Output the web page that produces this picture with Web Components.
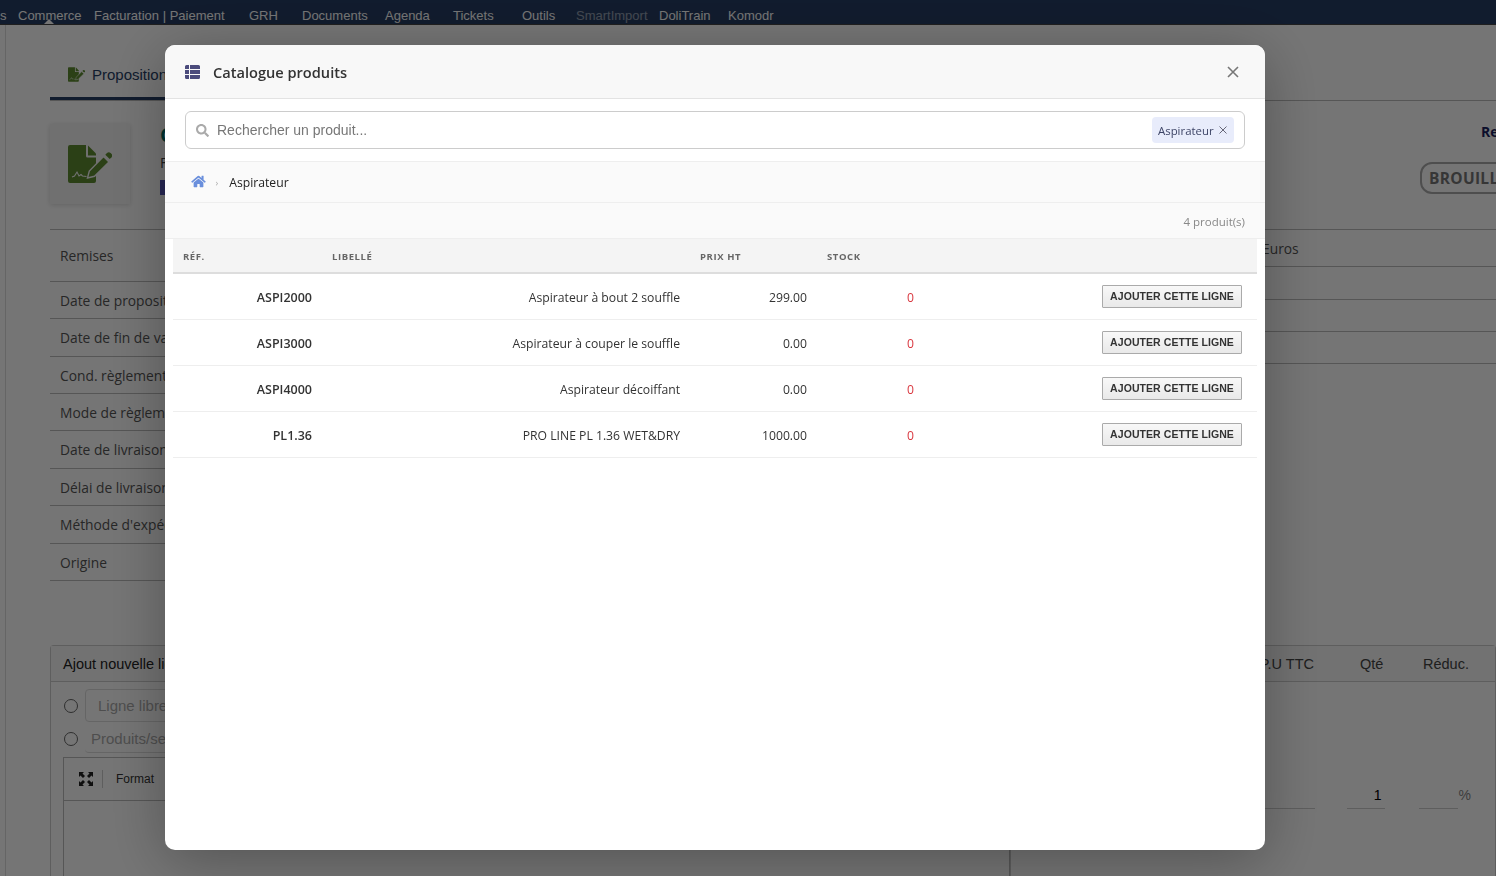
<!DOCTYPE html>
<html lang="fr">
<head>
<meta charset="utf-8">
<title>Catalogue produits</title>
<style>
  html, body { margin: 0; height: 876px; overflow: hidden; background: #fff; }
  body { font-family: "Liberation Sans", Arial, sans-serif; }
</style>
</head>
<body>
<main-page></main-page>
<catalog-modal>
  <product-row ref="ASPI2000" price="299.00" stock="0">Aspirateur à bout 2 souffle</product-row>
  <product-row ref="ASPI3000" price="0.00" stock="0">Aspirateur à couper le souffle</product-row>
  <product-row ref="ASPI4000" price="0.00" stock="0">Aspirateur décoiffant</product-row>
  <product-row ref="PL1.36" price="1000.00" stock="0">PRO LINE PL 1.36 WET&amp;DRY</product-row>
</catalog-modal>

<script>
// same drawing for the tab and for the big box, --cut is the colour behind it
const fileIcon = `
  <path d="M2 0H18V11a1.500 1.500 0 0 0 1.500 1.500H28V36a2 2 0 0 1-2 2H2a2 2 0 0 1-2-2V2A2 2 0 0 1 2 0z"/>
  <path d="M20 .5L28 8.500V10.500H20z"/>
  <path d="M4 32l2.500-1 2.500-4 2 4 2-1.500 1.500 1.500 4 .5" fill="none" style="stroke:var(--cut)" stroke-width="1.100"/>
  <path d="M19.500 33l1.800-7L35.500 11.500 41 17 26.500 31.300z" style="stroke:var(--cut)" stroke-width="1.400"/>
  <path d="M37.300 9.700l1.700-1.700a2.600 2.600 0 0 1 3.600 0l.8.800a2.600 2.600 0 0 1 0 3.600l-1.700 1.700z"/>`;

class TopBar extends HTMLElement {
  constructor() {
    super();
    this.attachShadow({ mode: 'open' });
    const items = [
      ['s', 0], ['Commerce', 18], ['Facturation | Paiement', 94], ['GRH', 249], ['Documents', 302],
      ['Agenda', 385], ['Tickets', 453], ['Outils', 522], ['SmartImport', 576], ['DoliTrain', 659], ['Komodr', 728]
    ];
    const html = items.map(([label, x]) => {
      const cls = label === 'SmartImport' ? 'off' : '';
      return `<a class="${cls}" data-x="${x}">${label}</a>`;
    }).join('');
    this.shadowRoot.innerHTML = `
    <style>
      :host {
        display: block;
        height: 24px;
        background: #263d64;
        border-bottom: 1px solid #444;
        color: #fff;
        font-size: 13px;
        position: relative;
      }
      nav { display: flex; height: 24px; align-items: center; padding-top: 7px; box-sizing: border-box; white-space: nowrap; }
      a { display: block; }
      a.off { opacity: .5; }
      .caret { position: absolute; left: 44px; bottom: 0; border: 5px solid transparent; border-top: 0; border-bottom-color: #fff; }
    </style>
    <nav>${html}</nav>
    <span class="caret"></span>`;
    const links = [...this.shadowRoot.querySelectorAll('a')];
    links.forEach((a, i) => {
      a.style.flex = '0 0 auto';
      const next = links[i + 1];
      a.style.width = next ? (next.dataset.x - a.dataset.x) + 'px' : 'auto';
    });
  }
}

class InfoRows extends HTMLElement {
  constructor() {
    super();
    this.attachShadow({ mode: 'open' });
    this.shadowRoot.innerHTML = `
    <style>
      :host { display: block; border-top: 1px solid #bbb; font-family: "Open Sans", sans-serif; font-size: 13.800px; color: #555; }
      ::slotted(div) { display: flex; align-items: center; border-bottom: 1px solid #bbb; padding-left: 10px; box-sizing: border-box; white-space: nowrap; }
    </style>
    <slot></slot>`;
  }
}

class MainPage extends HTMLElement {
  constructor() {
    super();
    this.attachShadow({ mode: 'open' });
    this.shadowRoot.innerHTML = `
    <style>
      :host { display: block; height: 876px; overflow: hidden; position: relative; }
      .frame { margin-left: 5px; border-left: 1px solid #ddd; padding-left: 44px; height: 851px; box-sizing: border-box; }
      .tabs { height: 75px; display: flex; border-bottom: 1px solid #bbb; margin-right: -1px; }
      .tab {
        width: 200px; height: 58px; margin-bottom: -1px; border-bottom: 3px solid #263d64;
        display: flex; align-items: flex-end; padding: 0 0 14px 18px; gap: 7px;
        font-family: "Liberation Sans", sans-serif; font-size: 15px; color: #263d64;
      }
      .tab svg { width: 17px; height: 15px; fill: #5e8c31; margin-bottom: 1px; --cut: #fff; }
      .top { display: flex; height: 128px; }
      .icon-box {
        width: 80px; height: 80px; margin-top: 23px; background: #f5f5f5; box-shadow: 0 1px 5px rgba(0,0,0,.15);
        display: flex; align-items: center; justify-content: center;
      }
      .icon-box svg { width: 44px; height: 38px; fill: #5e8c31; --cut: #f5f5f5; }
      .title { margin: 22px 0 0 30px; font-family: "Open Sans", sans-serif; color: #444; font-size: 14px; }
      .title b { display: block; height: 24px; line-height: 24px; font-size: 20px; color: #00706b; }
      .title span { display: block; margin-top: 6px; line-height: 20px; }
      .title i { display: block; margin-top: 7px; width: 30px; height: 15px; background: #5656b8; }
      .right-head { margin-left: auto; width: 76px; display: flex; flex-direction: column; align-items: flex-start; overflow: hidden; font-family: "Open Sans", sans-serif; }
      .right-head b { margin: 21px 0 0 61px; color: #1a1f5e; font-size: 14px; }
      .badge {
        margin: 21px 0 0 0; width: 110px; flex: none; height: 32px; border: 2px solid #aaa; border-radius: 12px; box-sizing: border-box;
        font-weight: 700; font-size: 15.500px; color: #777; letter-spacing: .3px; padding: 3px 0 0 7px; white-space: nowrap;
      }
      .cols { display: flex; justify-content: space-between; }
      .left { width: 720px; }
      .right { width: 716px; }
      .r1 { height: 52px; } .r2 { height: 37px; } .r3 { height: 38px; }
      .gap { height: 64px; }
      .card { border: 1px solid #ccc; border-radius: 4px 4px 0 0; border-bottom: 0; width: 1446px; box-sizing: border-box; height: 240px; }
      .card-head {
        padding-left: 12px; box-sizing: border-box; height: 36px; border-bottom: 1px solid #ccc; display: flex; align-items: center; font-size: 14.500px; color: #222; background: #f8f8f8;
      }
      .card-head span.p { margin-left: auto; width: 101px; text-align: right; padding-right: 46px; box-sizing: border-box; color: #444; white-space: nowrap; }
      .card-head span.q { width: 63px; color: #444; }
      .card-head span.r { width: 72px; color: #444; }
      .body { display: flex; }
      .body-left { width: 960px; border-right: 1px solid #ccc; height: 204px; padding: 7px 0 0 13px; box-sizing: border-box; }
      .radio-row { display: flex; align-items: center; gap: 7px; color: #aaa; font-size: 15px; }
      .radio { width: 12px; height: 12px; border: 1px solid #666; border-radius: 50%; flex: none; }
      .field { border: 1px solid #ddd; border-radius: 4px; height: 33px; width: 300px; display: flex; align-items: center; padding-left: 12px; box-sizing: border-box; }
      .radio-row + .radio-row { margin-top: 2px; height: 30px; }
      .radio-row + .radio-row .field { border-width: 0 0 1px; padding-left: 6px; height: 28px; }
      .editor { border: 1px solid #bbb; height: 200px; margin: 3px 0 0 -1px; }
      .toolbar { height: 42px; border-bottom: 1px solid #bbb; display: flex; align-items: center; padding-left: 15px; gap: 9px; font-size: 12px; color: #333; }
      .toolbar svg { width: 14px; height: 14px; fill: #222; }
      .sep { width: 1px; height: 18px; background: #ccc; margin-right: 4px; }
      .body-right { flex: 1; display: flex; justify-content: flex-end; align-items: flex-start; padding: 101px 24px 0 0; box-sizing: border-box; font-size: 14px; color: #000; }
      .under { border-bottom: 1px solid #ccc; height: 26px; box-sizing: border-box; text-align: right; line-height: 24px; }
      .u1 { width: 150px; margin-right: 32px; }
      .u2 { width: 38px; padding-right: 3px; margin-right: 34px; box-sizing: border-box; }
      .u3 { width: 39px; margin-right: 1px; }
      .pct { color: #888; line-height: 24px; }
    </style>
    <top-bar></top-bar>
    <div class="frame">
      <div class="tabs">
        <div class="tab">
          <svg viewBox="0 0 44 38">${fileIcon}</svg><span>Proposition</span>
        </div>
      </div>
      <div class="top">
        <div class="icon-box"><svg viewBox="0 0 44 38">${fileIcon}</svg></div>
        <div class="title"><b>C</b><span>F</span><i></i></div>
        <div class="right-head"><b>Re</b><div class="badge">BROUILLON</div></div>
      </div>
      <div class="cols">
        <info-rows class="left">
          <div class="r1">Remises</div>
          <div class="r2">Date de proposition</div>
          <div class="r3">Date de fin de validité</div>
          <div class="r2">Cond. règlement</div>
          <div class="r2">Mode de règlement</div>
          <div class="r3">Date de livraison</div>
          <div class="r2">Délai de livraison</div>
          <div class="r3">Méthode d'expédition</div>
          <div class="r2">Origine</div>
        </info-rows>
        <info-rows class="right">
          <div style="height:37px;padding-left:482px">Euros</div>
          <div style="height:33px"></div>
          <div style="height:32px"></div>
          <div style="height:32px"></div>
        </info-rows>
      </div>
      <div class="gap"></div>
      <div class="card">
        <div class="card-head"><span>Ajout nouvelle ligne</span><span class="p">P.U TTC</span><span class="q">Qté</span><span class="r">Réduc.</span></div>
        <div class="body">
          <div class="body-left">
            <div class="radio-row"><span class="radio"></span><span class="field">Ligne libre</span></div>
            <div class="radio-row"><span class="radio"></span><span class="field">Produits/services</span></div>
            <div class="editor">
              <div class="toolbar">
                <svg viewBox="0 0 14 14"><path d="M0 0h5L3.500 1.500 6 4 4 6 1.500 3.500 0 5zM14 0v5l-1.500-1.500L10 6 8 4l2.500-2.500L9 0zM0 14V9l1.500 1.500L4 8l2 2-2.500 2.500L5 14zM14 14H9l1.500-1.500L8 10l2-2 2.500 2.500L14 9z"/></svg>
                <span class="sep"></span><span>Format</span>
              </div>
            </div>
          </div>
          <div class="body-right">
            <div class="under u1"></div>
            <div class="under u2">1</div>
            <div class="under u3"></div>
            <div class="pct">%</div>
          </div>
        </div>
      </div>
    </div>`;
  }
}

class CatalogModal extends HTMLElement {
  constructor() {
    super();
    this.attachShadow({ mode: 'open' });
    this.shadowRoot.innerHTML = `
    <style>
      :host {
        position: fixed; inset: 0; display: flex; align-items: flex-start;
        padding: 45px 0 0 165px; box-sizing: border-box;
        background: rgba(0,0,0,.54);
        font-family: "Open Sans", "Noto Sans", sans-serif;
      }
      .modal {
        width: 1100px; height: 805px; background: #fff; border-radius: 10px; overflow: hidden;
        box-shadow: 0 10px 60px rgba(0,0,0,.3);
        display: flex; flex-direction: column;
      }
      .head {
        flex: 0 0 53px; background: #f8f8f8; border-bottom: 1px solid #e3e3e3;
        display: flex; align-items: center; padding: 0 25px 0 20px;
      }
      .head svg.list { width: 15px; height: 14px; fill: #4b4b7c; margin-right: 13px; }
      .head h2 { margin: 1px 0 0; font-size: 14.600px; font-weight: 600; color: #333; }
      .close { margin-left: auto; width: 14px; height: 14px; stroke: #777; stroke-width: 1.600; fill: none; }
      .search-wrap { flex: 0 0 62px; padding: 12px 20px; box-sizing: border-box; }
      .search {
        height: 38px; border: 1px solid #ccc; border-radius: 6px; box-sizing: border-box;
        display: flex; align-items: center; padding: 0 10px;
      }
      .search svg { width: 13px; height: 13px; fill: #aaa; margin-right: 8px; }
      .placeholder { font: 14px "Liberation Sans", sans-serif; color: #777; }
      .tag {
        margin-left: auto; height: 26px; width: 82px; box-sizing: border-box; padding: 0 6px; border-radius: 4px;
        background: #e8ecfb; color: #3d4466; font-size: 11.400px; display: flex; align-items: center; justify-content: space-between;
      }
      .tag svg { width: 8px; height: 8px; stroke: #667; stroke-width: 1; fill: none; margin-right: 1px; }
      .crumbs {
        flex: 0 0 40px; background: #fafafa; border-top: 1px solid #eee; border-bottom: 1px solid #eee;
        display: flex; align-items: center; padding-left: 26px; font-size: 12.200px; font-weight: 500; color: #222;
      }
      .crumbs svg { width: 15px; height: 13px; fill: #6a8fdc; margin-top: -2px; }
      .crumbs i { font-style: normal; font-weight: 400; font-size: 9px; color: #aaa; margin: 0 11px 0 9.500px; }
      .count {
        flex: 0 0 36px; background: #fafafa; border-bottom: 1px solid #eee; box-sizing: border-box;
        display: flex; align-items: center; justify-content: flex-end; padding: 1px 20px 0 0; font-size: 11.500px; color: #888;
      }
      .table { padding: 0 8px; }
      .thead {
        display: grid; grid-template-columns: 149px 368px 127px 107px 1fr; height: 35px; box-sizing: border-box;
        background: #f4f4f4; border-bottom: 2px solid #ddd; align-items: center;
        font-size: 9.500px; font-weight: 700; color: #666; letter-spacing: .6px;
      }
      .thead span { padding: 1px 10px 0; }
    </style>
    <div class="modal">
      <div class="head">
        <svg class="list" viewBox="0 0 15 14"><path d="M0 1.500A1.500 1.500 0 0 1 1.500 0H4v4H0zM5 0h8.500A1.500 1.500 0 0 1 15 1.500V4H5zM0 5h4v4H0zM5 5h10v4H5zM0 10h4v4H1.500A1.500 1.500 0 0 1 0 12.500zM5 10h10v2.500a1.500 1.500 0 0 1-1.500 1.500H5z"/></svg>
        <h2>Catalogue produits</h2>
        <svg class="close" viewBox="0 0 14 14"><path d="M2 2l10 10M12 2L2 12"/></svg>
      </div>
      <div class="search-wrap">
        <div class="search">
          <svg viewBox="0 0 512 512"><path d="M505 442.700L405.300 343c-4.500-4.500-10.600-7-17-7H372c27.600-35.300 44-79.700 44-128C416 93.100 322.900 0 208 0S0 93.100 0 208s93.100 208 208 208c48.300 0 92.700-16.400 128-44v16.300c0 6.400 2.500 12.500 7 17l99.700 99.700c9.400 9.400 24.600 9.400 33.900 0l28.300-28.300c9.400-9.400 9.400-24.600.1-34zM208 336c-70.700 0-128-57.200-128-128 0-70.700 57.200-128 128-128 70.700 0 128 57.200 128 128 0 70.700-57.200 128-128 128z"/></svg>
          <span class="placeholder">Rechercher un produit...</span>
          <span class="tag">Aspirateur<svg viewBox="0 0 8 8"><path d="M.5.500l7 7M7.500.500l-7 7"/></svg></span>
        </div>
      </div>
      <div class="crumbs">
        <svg viewBox="0 0 576 512"><path d="M280.370 148.260L96 300.110V464a16 16 0 0 0 16 16l112.060-.29a16 16 0 0 0 15.920-16V368a16 16 0 0 1 16-16h64a16 16 0 0 1 16 16v95.640a16 16 0 0 0 16 16.050L464 480a16 16 0 0 0 16-16V300L295.670 148.260a12.190 12.190 0 0 0-15.300 0zM571.600 251.470L488 182.560V44.050a12 12 0 0 0-12-12h-56a12 12 0 0 0-12 12v72.610L318.470 43a48 48 0 0 0-61 0L4.340 251.470a12 12 0 0 0-1.600 16.900l25.500 31A12 12 0 0 0 45.150 301l235.220-193.740a12.190 12.190 0 0 1 15.300 0L530.900 301a12 12 0 0 0 16.900-1.600l25.500-31a12 12 0 0 0-1.700-16.930z"/></svg>
        <i>›</i><span>Aspirateur</span>
      </div>
      <div class="count">4 produit(s)</div>
      <div class="table">
        <div class="thead"><span>RÉF.</span><span>LIBELLÉ</span><span>PRIX HT</span><span>STOCK</span><span></span></div>
        <slot></slot>
      </div>
    </div>`;
  }
}

class ProductRow extends HTMLElement {
  constructor() {
    super();
    this.attachShadow({ mode: 'open' });
  }

  connectedCallback() {
    this.shadowRoot.innerHTML = `
    <style>
      :host {
        display: grid; grid-template-columns: 149px 368px 127px 107px 1fr; height: 46px; box-sizing: border-box;
        border-bottom: 1px solid #eee; align-items: center; font-size: 12.200px; color: #333;
      }
      .c { text-align: right; padding: 1px 10px 0; }
      .ref { font-weight: 600; font-size: 12.500px; }
      .stock { color: #d9363e; }
      .act { display: flex; justify-content: flex-end; padding-right: 15px; }
      button {
        width: 140px; height: 23px; padding: 0 0 2px; border: 1px solid #aaa; border-radius: 1px; box-sizing: border-box;
        background: linear-gradient(#f8f8f8, #e9e9e9); color: #333;
        font: 700 10.500px "Liberation Sans", sans-serif; letter-spacing: .07px;
      }
    </style>
    <div class="c ref">${this.getAttribute('ref')}</div>
    <div class="c"><slot></slot></div>
    <div class="c">${this.getAttribute('price')}</div>
    <div class="c stock">${this.getAttribute('stock')}</div>
    <div class="act"><button>AJOUTER CETTE LIGNE</button></div>`;
  }
}

customElements.define('top-bar', TopBar);
customElements.define('info-rows', InfoRows);
customElements.define('main-page', MainPage);
customElements.define('catalog-modal', CatalogModal);
customElements.define('product-row', ProductRow);
</script>
</body>
</html>
